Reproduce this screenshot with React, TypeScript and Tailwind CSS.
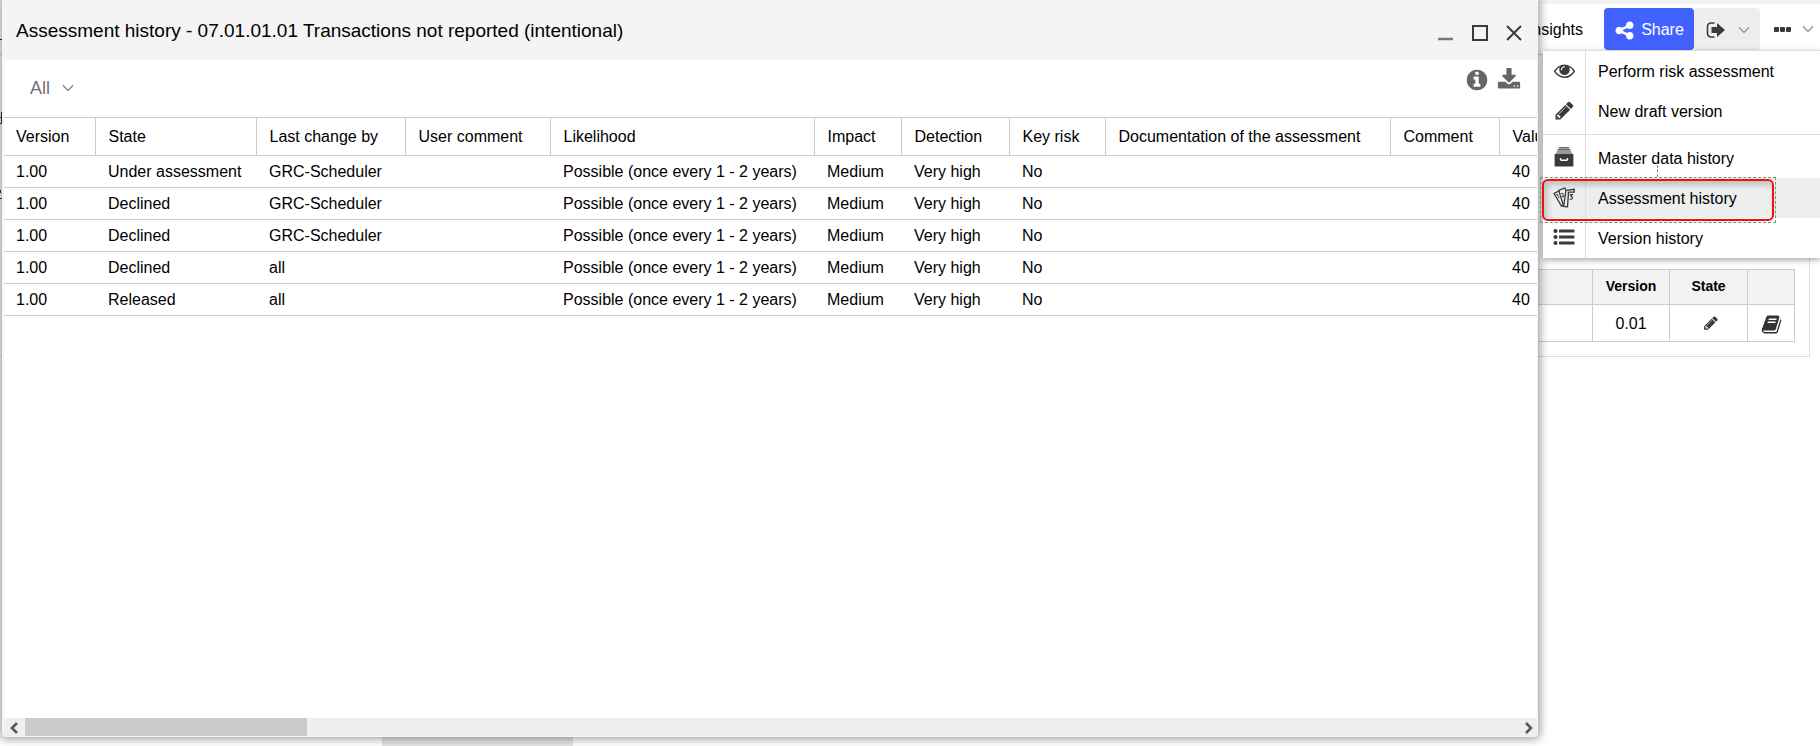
import { useState, ReactNode } from "react";

type IconProps = { className?: string };

function Glyph({ d, className }: { d: string; className?: string }) {
  return (
    <svg viewBox="0 0 1792 1792" fill="currentColor" className={className} aria-hidden="true">
      <path d={d} />
    </svg>
  );
}

const glyphs = {
  share:
    "M1344 1024q133 0 226.5 93.5t93.5 226.5-93.5 226.5-226.5 93.5-226.5-93.5-93.5-226.5q0-12 2-34l-360-180q-92 86-218 86-133 0-226.5-93.5t-93.5-226.5 93.5-226.5 226.5-93.5q126 0 218 86l360-180q-2-22-2-34 0-133 93.5-226.5t226.5-93.5 226.5 93.5 93.5 226.5-93.5 226.5-226.5 93.5q-126 0-218-86l-360 180q2 22 2 34t-2 34l360 180q92-86 218-86z",
  eye: "M1664 960q-152-236-381-353 61 104 61 225 0 185-131.5 316.5t-316.5 131.5-316.5-131.5-131.5-316.5q0-121 61-225-229 117-381 353 133 205 333.5 326.5t434.5 121.5 434.5-121.5 333.5-326.5zm-720-384q0-20-14-34t-34-14q-125 0-214.5 89.5t-89.5 214.5q0 20 14 34t34 14 34-14 14-34q0-86 61-147t147-61q20 0 34-14t14-34zm848 384q0 34-20 69-140 230-376.5 368.5t-499.5 138.5-499.5-139-376.5-368q-20-35-20-69t20-69q140-229 376.5-368t499.5-139 499.5 139 376.5 368q20 35 20 69z",
  pencil:
    "M491 1536l91-91-235-235-91 91v107h128v128h107zm523-928q0-22-22-22-10 0-17 7l-542 542q-7 7-7 17 0 22 22 22 10 0 17-7l542-542q7-7 7-17zm-54-192l416 416-832 832h-416v-416zm683 96q0 53-37 90l-166 166-416-416 166-165q36-38 90-38 53 0 91 38l235 234q37 39 37 91z",
  info: "M1152 1376v-160q0-14-9-23t-23-9h-96v-512q0-14-9-23t-23-9h-320q-14 0-23 9t-9 23v160q0 14 9 23t23 9h96v320h-96q-14 0-23 9t-9 23v160q0 14 9 23t23 9h448q14 0 23-9t9-23zm-128-896v-160q0-14-9-23t-23-9h-192q-14 0-23 9t-9 23v160q0 14 9 23t23 9h192q14 0 23-9t9-23zm640 416q0 209-103 385.5t-279.5 279.5-385.5 103-385.5-103-279.5-279.5-103-385.5 103-385.5 279.5-279.5 385.5-103 385.5 103 279.5 279.5 103 385.5z",
  download:
    "M1344 1344q0-26-19-45t-45-19-45 19-19 45 19 45 45 19 45-19 19-45zm256 0q0-26-19-45t-45-19-45 19-19 45 19 45 45 19 45-19 19-45zm128-224v320q0 40-28 68t-68 28h-1472q-40 0-68-28t-28-68v-320q0-40 28-68t68-28h465l135 136q58 56 136 56t136-56l136-136h464q40 0 68 28t28 68zm-325-569q17 41-14 70l-448 448q-18 19-45 19t-45-19l-448-448q-31-29-14-70 17-39 59-39h256v-448q0-26 19-45t45-19h256q26 0 45 19t19 45v448h256q42 0 59 39z",
  book: "M1703 478q40 57 18 129l-275 906q-19 64-76.5 107.5t-122.5 43.5h-923q-77 0-148.5-53.5t-99.5-131.5q-24-67-2-127 0-4 3-27t4-37q1-8-3-21.5t-3-19.5q2-11 8-21t16.5-23.5 16.5-23.5q23-38 45-91.5t30-91.5q3-10 .5-30t-.5-28q3-11 17-28t17-23q21-36 42-92t25-90q1-9-2.5-32t.5-28q4-13 22-30.5t22-22.5q19-26 42.5-84.5t27.5-96.5q1-8-3-25.5t-2-26.5q2-8 9-18t18-23 17-21q8-12 16.5-30.5t15-35 16-36 19.5-32 26.5-23.5 36-11.5 47.5 5.5l-1 3q38-9 51-9h761q74 0 114 56t18 130l-274 906q-36 119-71.5 153.5t-128.5 34.5h-869q-27 0-38 15-11 16-1 43 24 70 144 70h923q29 0 56-15.5t35-41.5l300-987q7-22 5-57 38 15 59 43zm-1064 2q-4 13 2 22.5t20 9.5h608q13 0 25.5-9.5t16.5-22.5l21-64q4-13-2-22.5t-20-9.5h-608q-13 0-25.5 9.5t-16.5 22.5zm-83 256q-4 13 2 22.5t20 9.5h608q13 0 25.5-9.5t16.5-22.5l21-64q4-13-2-22.5t-20-9.5h-608q-13 0-25.5 9.5t-16.5 22.5z",
};

function Chevron({ className }: IconProps) {
  return (
    <svg viewBox="0 0 12 8" fill="none" stroke="currentColor" strokeWidth="1.4" className={className} aria-hidden="true">
      <path d="M1 1.2l5 5.3 5-5.3" />
    </svg>
  );
}

function ExitIcon() {
  return (
    <svg viewBox="0 0 20 16" className="h-4 w-5" aria-hidden="true">
      <path d="M8.5 1H5a3.5 3.5 0 0 0-3.5 3.5v7A3.5 3.5 0 0 0 5 15h3.5" fill="none" stroke="#3a3a3a" strokeWidth="1.6" />
      <path d="M5.5 5H11V1l8 7-8 7v-4H5.5z" fill="#3a3a3a" />
    </svg>
  );
}

function ArchiveIcon() {
  return (
    <svg viewBox="0 0 20 20" className="h-5 w-5" aria-hidden="true">
      <path d="M5 .8h10M3.5 2.900h13M2.500 5h15" stroke="#3a3a3a" strokeWidth="1.200" />
      <path d="M1.500 6.600h17l.9 1.200v11a.7.7 0 0 1-.7.700H1.300a.7.7 0 0 1-.7-.700v-11z" fill="#3a3a3a" />
      <path d="M6.500 11v1.200q0 1 1 1h5q1 0 1-1V11" fill="none" stroke="#fff" strokeWidth="1.500" />
    </svg>
  );
}

function CardsIcon() {
  return (
    <svg viewBox="0 0 22 21" className="h-[21px] w-[22px]" fill="none" stroke="#3a3a3a" strokeWidth="1.3" aria-hidden="true">
      <path d="M6.5 3.600L1 6.500l7.500 12.700 1.800-.8" />
      <path d="M2.800 7.800l1.300-.6 2 4" strokeWidth="1" />
      <path d="M13 3.200L11.800 1 5.700 3.400l5 15.800" />
      <path d="M7.900 6.800q2.200-1.400 2.400.3 0 1.200-1.200 2.800l2.300-.6" strokeWidth="1" />
      <path d="M13 3.300l8.200-1v2.800h-5.700l-1 14.800-3.900-.4z" />
      <path d="M16.700 7.600h2.600l-1.400 1.900q2.200.1 1.500 1.900-.9 1.300-2.800.5" strokeWidth="1.100" />
    </svg>
  );
}

function ListIcon() {
  return (
    <svg viewBox="0 0 22 18" className="h-[18px] w-[22px]" fill="#3a3a3a" aria-hidden="true">
      {[3, 9, 15].map((y) => (
        <g key={y}>
          <circle cx="2.5" cy={y} r="2.1" />
          <rect x="6" y={y - 1.5} width="15.5" height="3" rx="0.5" />
        </g>
      ))}
    </svg>
  );
}

const columns = [
  { label: "Version", width: "w-[91px]" },
  { label: "State", width: "w-[161px]" },
  { label: "Last change by", width: "w-[149px]" },
  { label: "User comment", width: "w-[145px]" },
  { label: "Likelihood", width: "w-[264px]" },
  { label: "Impact", width: "w-[87px]" },
  { label: "Detection", width: "w-[108px]" },
  { label: "Key risk", width: "w-[96px]" },
  { label: "Documentation of the assessment", width: "w-[285px]" },
  { label: "Comment", width: "w-[109px]" },
  { label: "Value", width: "w-[160px]" },
];

const rows = [
  { state: "Under assessment", user: "GRC-Scheduler" },
  { state: "Declined", user: "GRC-Scheduler" },
  { state: "Declined", user: "GRC-Scheduler" },
  { state: "Declined", user: "all" },
  { state: "Released", user: "all" },
];

function HistoryTable() {
  return (
    <div className="flex-1 overflow-hidden">
      <table className="w-[1655px] table-fixed border-collapse text-left text-base leading-5 text-black">
        <thead>
          <tr className="h-[38px] border-y border-[#ccc]">
            {columns.map((col, i) => (
              <th
                key={col.label}
                scope="col"
                className={`${col.width} border-r border-[#ccc] font-normal whitespace-nowrap ${i === 0 ? "pl-3" : "pl-[13px]"}`}
              >
                {col.label}
              </th>
            ))}
          </tr>
        </thead>
        <tbody>
          {rows.map((row, i) => (
            <tr key={i} className="h-8 border-b border-[#ccc] whitespace-nowrap">
              <td className="pl-3">1.00</td>
              <td className="pl-[13px]">{row.state}</td>
              <td className="pl-[13px]">{row.user}</td>
              <td></td>
              <td className="pl-[13px]">Possible (once every 1 - 2 years)</td>
              <td className="pl-[13px]">Medium</td>
              <td className="pl-[13px]">Very high</td>
              <td className="pl-[13px]">No</td>
              <td></td>
              <td></td>
              <td className="pl-[13px]">40</td>
            </tr>
          ))}
        </tbody>
      </table>
    </div>
  );
}

function HistoryWindow() {
  const [filter, setFilter] = useState("All");

  return (
    <section className="absolute top-0 right-[282px] bottom-[9px] left-0.5 flex flex-col overflow-hidden rounded-b border-r border-b border-l-2 border-[#f4f4f4] bg-white shadow-[0_0_10px_2px_rgba(0,0,0,0.4)]">
      {/* Title bar */}
      <header className="flex h-[60px] shrink-0 items-center justify-between bg-[#f4f4f4] pr-[15px] pl-3">
        <h1 className="pt-0.5 text-[19px] text-black">Assessment history - 07.01.01.01 Transactions not reported (intentional)</h1>
        <div className="flex items-center gap-[18px] pt-1.5 text-[#3a3a3a]">
          <button aria-label="Minimize">
            <svg viewBox="0 0 16 16" className="size-4">
              <path d="M0 14h15" stroke="#777" strokeWidth="2.5" />
            </svg>
          </button>
          <button aria-label="Maximize">
            <svg viewBox="0 0 16 16" className="size-4" fill="none" stroke="currentColor" strokeWidth="2">
              <path d="M1 1h14v14H1z" />
            </svg>
          </button>
          <button aria-label="Close">
            <svg viewBox="0 0 16 16" className="size-4" fill="none" stroke="currentColor" strokeWidth="2">
              <path d="M1 1l14 14M15 1L1 15" />
            </svg>
          </button>
        </div>
      </header>

      {/* Filter and actions */}
      <div className="flex h-[57px] shrink-0 justify-between pr-4 pl-[26px]">
        <label className="relative flex items-center pb-0.5">
          <span className="sr-only">Filter</span>
          <select
            value={filter}
            onChange={(e) => setFilter(e.target.value)}
            className="h-8 w-16 appearance-none bg-transparent text-lg leading-7 text-[#707070] outline-none"
          >
            <option>All</option>
          </select>
          <Chevron className="pointer-events-none absolute top-6 right-5 h-2 w-3 text-[#8a8a8a]" />
        </label>
        <div className="flex items-start gap-2 pt-2 text-[#666]">
          <button aria-label="Information">
            <Glyph d={glyphs.info} className="size-6" />
          </button>
          <button aria-label="Download">
            <Glyph d={glyphs.download} className="size-6" />
          </button>
        </div>
      </div>

      <HistoryTable />

      {/* Horizontal scroll bar */}
      <div className="flex h-[18px] shrink-0 justify-between bg-[#efefef] text-[#5a5a5a]">
        <div className="flex">
          <button aria-label="Scroll left" className="flex w-[21px] items-center pt-0.5 pl-1.5">
            <svg viewBox="0 0 8 12" className="h-3 w-2" fill="none" stroke="currentColor" strokeWidth="2.6">
              <path d="M7 1L2 6l5 5" />
            </svg>
          </button>
          <div className="w-[282px] bg-[#cbcbcb]"></div>
        </div>
        <button aria-label="Scroll right" className="flex w-4 items-center justify-center pt-0.5">
          <svg viewBox="0 0 8 12" className="h-3 w-2" fill="none" stroke="currentColor" strokeWidth="2.6">
            <path d="M1 1l5 5-5 5" />
          </svg>
        </button>
      </div>
    </section>
  );
}

function MenuItem({ icon, label, active }: { icon: ReactNode; label: string; active?: boolean }) {
  return (
    <li>
      <button className={`flex h-10 w-full items-center text-left ${active ? "bg-[#eee]" : ""}`}>
        <span className="flex h-full w-[43px] items-center justify-center border-r border-[#ddd] pb-0.5 text-[#3a3a3a]">
          {icon}
        </span>
        <span className="pt-0.5 pl-3">{label}</span>
      </button>
    </li>
  );
}

function ActionMenu() {
  return (
    <nav className="absolute top-[50px] right-0 w-[277px] border-t border-[#ddd] bg-white text-base whitespace-nowrap text-black shadow-[0_2px_6px_rgba(0,0,0,0.35)]">
      <ul>
        <MenuItem icon={<Glyph d={glyphs.eye} className="size-[21px]" />} label="Perform risk assessment" />
        <MenuItem icon={<Glyph d={glyphs.pencil} className="size-[21px]" />} label="New draft version" />
      </ul>
      <div>
        <div className="h-[3px] w-[43px] border-r border-[#ddd]"></div>
        <div className="border-t border-[#ddd]"></div>
        <div className="h-[3px] w-[43px] border-r border-[#ddd]"></div>
      </div>
      <ul>
        <MenuItem icon={<ArchiveIcon />} label="Master data history" />
        <MenuItem icon={<CardsIcon />} label="Assessment history" active />
        <MenuItem icon={<ListIcon />} label="Version history" />
      </ul>

      {/* Callout around the active item */}
      <div className="pointer-events-none absolute top-[126px] -left-[3px] h-[46px] w-[236px] border border-dashed border-[#888] p-px">
        <div className="h-full rounded-md border-2 border-[#f01010] shadow-[inset_3px_4px_6px_rgba(0,0,0,0.2)]"></div>
      </div>
      <div className="pointer-events-none absolute top-[114px] left-[114px] h-3 border-l border-dashed border-[#888]"></div>
    </nav>
  );
}

export default function App() {
  return (
    <div className="relative flex h-screen flex-col overflow-hidden bg-white font-['Liberation_Sans',Arial,sans-serif] text-black">
      {/* Page toolbar */}
      <div className="flex h-[55px] shrink-0 items-start justify-end border-t-4 border-b border-t-[#f3f3f3] border-b-[#ccc] pt-1">
        <a href="#insights" className="mr-[21px] flex h-[42px] items-center pt-0.5 text-base">
          Insights
        </a>
        <button className="flex h-[42px] w-[90px] items-center justify-center gap-1.5 rounded bg-[#4262ff] pt-0.5 text-base text-white">
          <Glyph d={glyphs.share} className="size-[21px]" />
          Share
        </button>
        <button aria-label="Export" className="flex h-[42px] w-[66px] items-center gap-3 rounded bg-[#eee] pt-0.5 pl-3">
          <ExitIcon />
          <Chevron className="h-2 w-3 text-[#999]" />
        </button>
        <button aria-label="More" className="flex h-[42px] w-[60px] items-center gap-2.5 pl-3.5">
          <svg viewBox="0 0 18 6" className="h-1.5 w-[18px]" fill="#3a3a3a" aria-hidden="true">
            <rect x="0" y="1" width="5" height="5" rx="1" />
            <rect x="6" y="1" width="5" height="5" rx="1" />
            <rect x="12" y="1" width="5" height="5" rx="1" />
          </svg>
          <Chevron className="h-2 w-3 text-[#999]" />
        </button>
      </div>

      {/* Version list behind the window */}
      <div className="mr-2.5 flex h-[302px] shrink-0 items-end justify-end border-r border-b border-[#ddd] pr-3.5 pb-3.5">
        <table className="w-[400px] table-fixed border-collapse text-center">
          <thead>
            <tr className="h-[35px] bg-[#f2f2f2] text-sm">
              <th className="border border-[#ccc]"></th>
              <th className="w-[77px] border border-[#ccc] pb-0.5 font-bold">Version</th>
              <th className="w-[78px] border border-[#ccc] pb-0.5 font-bold">State</th>
              <th className="w-[47px] border border-[#ccc]"></th>
            </tr>
          </thead>
          <tbody>
            <tr className="h-[37px] text-base">
              <td className="border border-[#ccc]"></td>
              <td className="border border-[#ccc] pt-0.5">0.01</td>
              <td className="border border-[#ccc] pl-1">
                <Glyph d={glyphs.pencil} className="mx-auto size-4 text-[#3a3a3a]" />
              </td>
              <td className="border border-[#ccc] pt-0.5">
                <Glyph d={glyphs.book} className="mx-auto size-[21px] text-[#333]" />
              </td>
            </tr>
          </tbody>
        </table>
      </div>

      <div className="mt-auto ml-[382px] h-4 w-[191px] shrink-0 bg-[#e5e5e5]"></div>

      {/* Sliver of the page left of the window */}
      <svg viewBox="0 0 2 220" className="absolute top-0 left-0 h-[220px] w-0.5" fill="#333" aria-hidden="true">
        <path d="M0 39h2v1H0zM1 112h1v12H1zM0 117h1v1H0zM0 123h1v1H0zM0 190h1v3H0zM0 198h2v1H0z" />
      </svg>

      <HistoryWindow />
      <ActionMenu />
    </div>
  );
}
